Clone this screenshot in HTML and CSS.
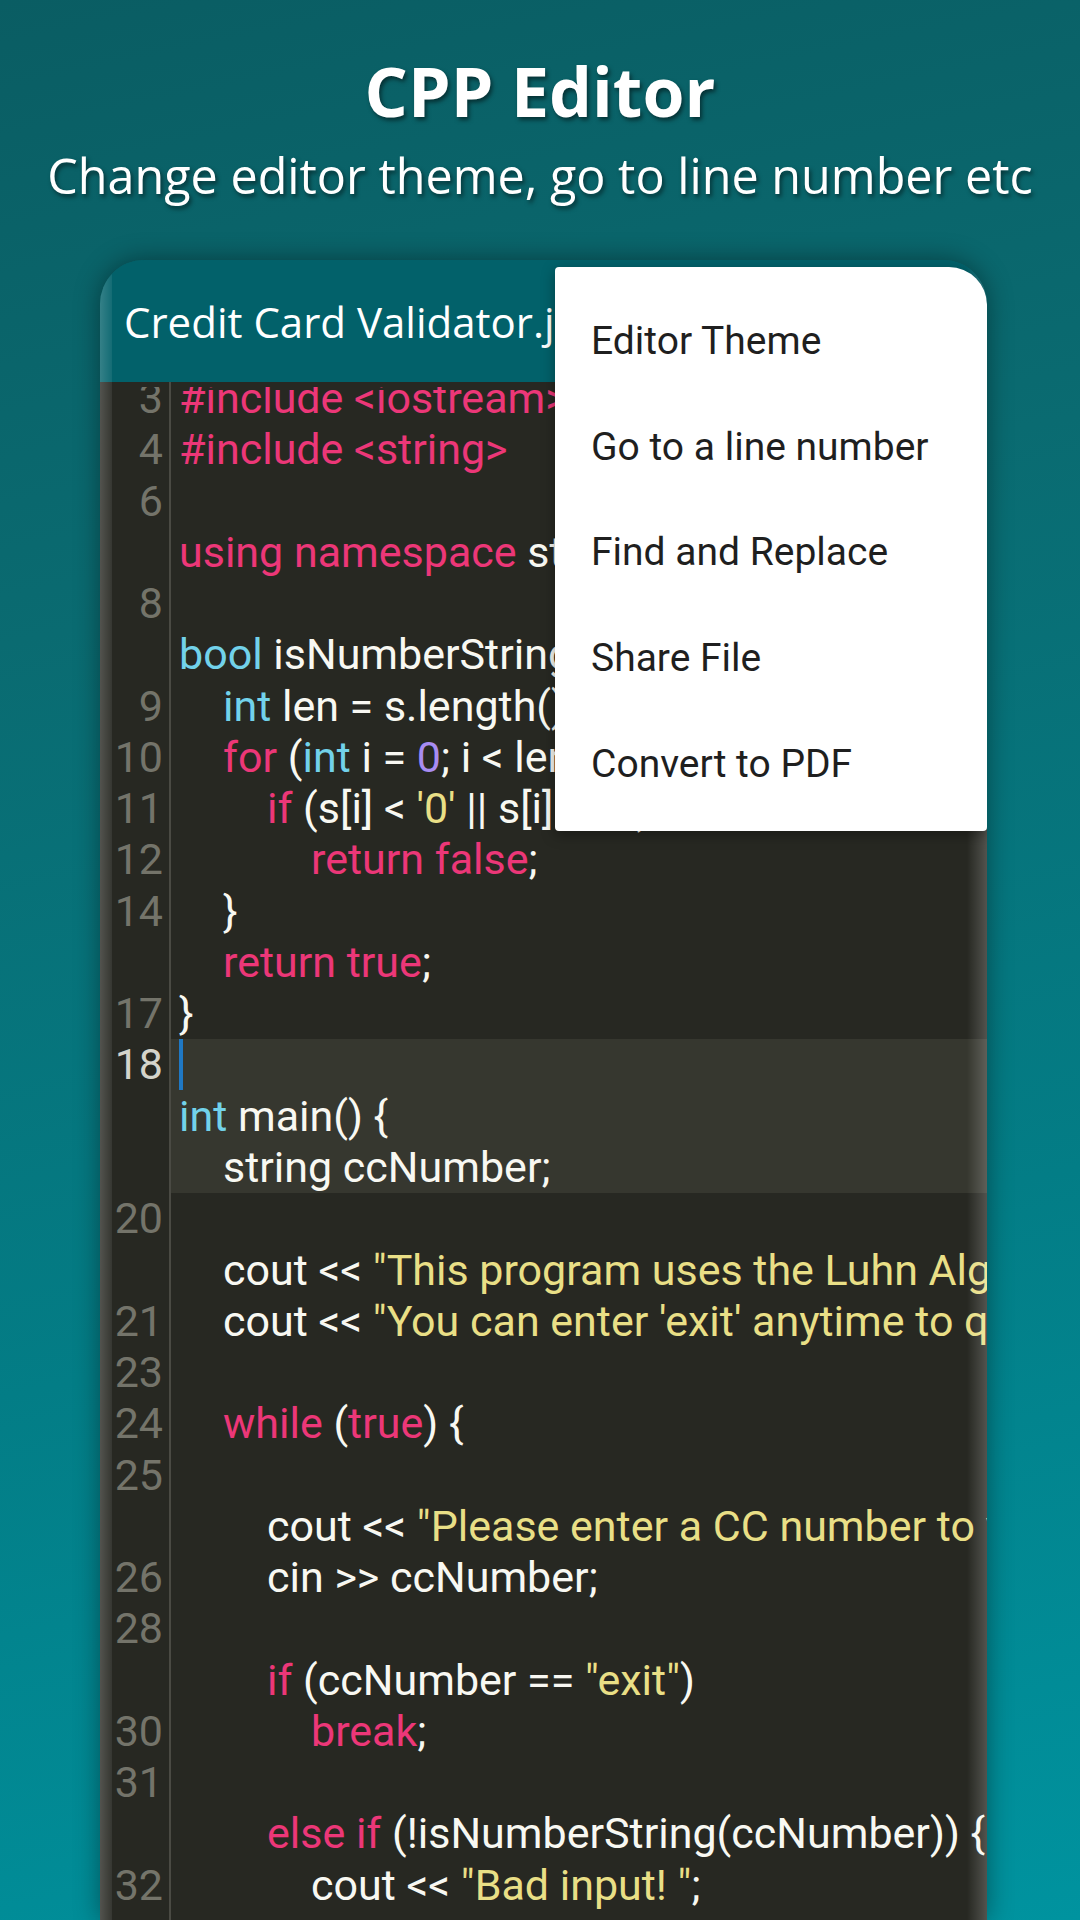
FILE: index.html
```html
<html>

<head>
    <meta charset="UTF-8">
    <meta name="viewport" content="width=device-width, initial-scale=1.0">
    <title>CPP Editor</title>
    <link rel="stylesheet" href="styles.css">
</head>

<body>
    <header class="promo">
        <h1 class="promo-title">CPP Editor</h1>
        <p class="promo-sub">Change editor theme, go to line number etc</p>
    </header>

    <div class="phone">
        <div class="app-bar">
            <span class="file-name">Credit Card Validator.java</span>
        </div>

        <div class="editor">
            <div class="gutter">
                <div class="clip">
                    <div class="nums">
                        <div class="num-row">3</div>
                        <div class="num-row">4</div>
                        <div class="num-row">6</div>
                        <div class="num-row"></div>
                        <div class="num-row">8</div>
                        <div class="num-row"></div>
                        <div class="num-row">9</div>
                        <div class="num-row">10</div>
                        <div class="num-row">11</div>
                        <div class="num-row">12</div>
                        <div class="num-row">14</div>
                        <div class="num-row"></div>
                        <div class="num-row">17</div>
                        <div class="num-row active">18</div>
                        <div class="num-row"></div>
                        <div class="num-row"></div>
                        <div class="num-row">20</div>
                        <div class="num-row"></div>
                        <div class="num-row">21</div>
                        <div class="num-row">23</div>
                        <div class="num-row">24</div>
                        <div class="num-row">25</div>
                        <div class="num-row"></div>
                        <div class="num-row">26</div>
                        <div class="num-row">28</div>
                        <div class="num-row"></div>
                        <div class="num-row">30</div>
                        <div class="num-row">31</div>
                        <div class="num-row"></div>
                        <div class="num-row">32</div>
                    </div>
                </div>
            </div>

            <div class="code">
                <div class="clip">
                    <div class="lines">
                        <div class="line"><span class="kw">#include &lt;iostream&gt;</span></div>
                        <div class="line"><span class="kw">#include &lt;string&gt;</span></div>
                        <div class="line"></div>
                        <div class="line"><span class="kw">using namespace</span> std;</div>
                        <div class="line"></div>
                        <div class="line"><span class="ty">bool</span> isNumberString(string s) {</div>
                        <div class="line i1"><span class="ty">int</span> len = s.length();</div>
                        <div class="line i1"><span class="kw">for</span> (<span class="ty">int</span> i = <span class="nm">0</span>; i &lt; len; i++) {</div>
                        <div class="line i2"><span class="kw">if</span> (s[i] &lt; <span class="str">'0'</span> || s[i] &gt; <span class="str">'9'</span>)</div>
                        <div class="line i3"><span class="kw">return false</span>;</div>
                        <div class="line i1">}</div>
                        <div class="line i1"><span class="kw">return true</span>;</div>
                        <div class="line">}</div>
                        <div class="line current"><span class="caret"></span></div>
                        <div class="line current"><span class="ty">int</span> main() {</div>
                        <div class="line i1 current">string ccNumber;</div>
                        <div class="line"></div>
                        <div class="line i1">cout &lt;&lt; <span class="str">"This program uses the Luhn Algorithm to validate a CC number.\n"</span>;</div>
                        <div class="line i1">cout &lt;&lt; <span class="str">"You can enter 'exit' anytime to quit.\n"</span>;</div>
                        <div class="line"></div>
                        <div class="line i1"><span class="kw">while</span> (<span class="kw">true</span>) {</div>
                        <div class="line"></div>
                        <div class="line i2">cout &lt;&lt; <span class="str">"Please enter a CC number to validate: "</span>;</div>
                        <div class="line i2">cin &gt;&gt; ccNumber;</div>
                        <div class="line"></div>
                        <div class="line i2"><span class="kw">if</span> (ccNumber == <span class="str">"exit"</span>)</div>
                        <div class="line i3"><span class="kw">break</span>;</div>
                        <div class="line"></div>
                        <div class="line i2"><span class="kw">else if</span> (!isNumberString(ccNumber)) {</div>
                        <div class="line i3">cout &lt;&lt; <span class="str">"Bad input! "</span>;</div>
                    </div>
                </div>
            </div>
        </div>

        <ul class="menu">
            <li class="menu-item">Editor Theme</li>
            <li class="menu-item">Go to a line number</li>
            <li class="menu-item">Find and Replace</li>
            <li class="menu-item">Share File</li>
            <li class="menu-item">Convert to PDF</li>
        </ul>
    </div>
</body>

</html>
```

FILE: styles.css
```css
body {
    margin: 0;
    width: 1080px;
    height: 1920px;
    overflow: hidden;
    background: linear-gradient(168deg, #0a5d63 0%, #0a6b71 30%, #037d86 65%, #00939f 100%);
    font-family: "Open Sans", "Noto Sans", sans-serif;
}

.promo {
    padding-top: 51px;
    text-align: center;
    color: #fff;
}

.promo-title {
    margin: 0;
    font-size: 68px;
    line-height: 80px;
    font-weight: 700;
    text-shadow: 2px 3px 4px rgba(0, 0, 0, 0.5);
}

.promo-sub {
    margin: 14px 0 0;
    font-size: 48.5px;
    line-height: 60px;
    text-shadow: 2px 3px 4px rgba(0, 0, 0, 0.5);
}

.phone {
    position: relative;
    margin: 55px 0 0 100px;
    width: 887px;
    height: 1660px;
    border-radius: 44px 44px 0 0;
    overflow: hidden;
    box-shadow: 0 0 26px rgba(0, 0, 0, 0.4);
}

/* glass edge of the device */
.phone::before,
.phone::after {
    content: "";
    position: absolute;
    top: 0;
    bottom: 0;
    z-index: 1;
}

.phone::before {
    left: 0;
    width: 12px;
    background: linear-gradient(to right, rgba(255, 255, 255, 0.2), rgba(255, 255, 255, 0.07));
}

.phone::after {
    right: 0;
    width: 20px;
    background: linear-gradient(to right, rgba(255, 255, 255, 0), rgba(255, 255, 255, 0.2));
}

.app-bar {
    height: 122px;
    display: flex;
    align-items: center;
    padding-left: 24px;
    background: #02616a;
}

.file-name {
    color: #fff;
    font-size: 42px;
    white-space: nowrap;
}

.editor {
    display: flex;
    height: 1538px;
    background: #272822;
    font-family: Roboto, "Noto Sans", sans-serif;
    font-size: 43px;
    line-height: 51.27px;
}

.gutter {
    width: 63px;
    padding: 5px 6px 0 0;
    border-right: 2px solid #4a4a43;
    flex-shrink: 0;
}

.code {
    flex: 1;
    padding-top: 5px;
    min-width: 0;
}

.clip {
    height: 100%;
    overflow: hidden;
}

.nums,
.lines {
    margin-top: -14px;
}

.num-row {
    height: 51.27px;
    text-align: right;
    color: #74746a;
}

.num-row.active {
    color: #d4d4cb;
}

.line {
    height: 51.27px;
    padding-left: 8px;
    color: #f8f8f2;
    white-space: pre;
}

.line.i1 {
    padding-left: 52px;
}

.line.i2 {
    padding-left: 96px;
}

.line.i3 {
    padding-left: 140px;
}

.line.current {
    background: #36372f;
}

.caret {
    display: inline-block;
    width: 4px;
    height: 51px;
    vertical-align: top;
    background: #1f78c4;
}

.kw {
    color: #ec3778;
}

.ty {
    color: #72d2ea;
}

.nm {
    color: #a88cf2;
}

.str {
    color: #e9df86;
}

.menu {
    position: absolute;
    top: 7px;
    right: 0;
    z-index: 2;
    width: 432px;
    margin: 0;
    padding: 21px 0 15px;
    list-style: none;
    background: #fff;
    border-radius: 4px 38px 4px 4px;
    box-shadow: 0 4px 14px rgba(0, 0, 0, 0.35);
    font-family: Roboto, "Noto Sans", sans-serif;
}

.menu-item {
    height: 105.7px;
    display: flex;
    align-items: center;
    padding-left: 36px;
    font-size: 39px;
    color: #1f1f1f;
}
```
